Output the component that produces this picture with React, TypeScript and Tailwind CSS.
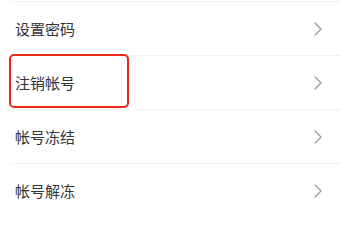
import React from 'react';

const items = ['设置密码', '注销帐号', '帐号冻结', '帐号解冻'];

const Chevron = () => (
    <svg width="8" height="14" viewBox="0 0 8 14" fill="none" className="text-[#9a9a9a]">
        <path d="M1 1l6 6-6 6" stroke="currentColor" strokeWidth="1.3" strokeLinecap="round" strokeLinejoin="round" />
    </svg>
);

export default function App() {
    return (
        <div
            className="w-[340px] h-[217px] overflow-hidden bg-white pt-px"
            style={{ fontFamily: '"Noto Sans CJK SC", "Noto Sans", sans-serif' }}
        >
            {items.map((label, i) => (
                <div key={label} className="relative ml-[12px] h-[54px] border-t border-[#f2f2f2] flex items-center justify-between pl-[3px] pr-[18px]">
                    <span className="text-[15px] leading-none text-[#333333]">{label}</span>
                    <Chevron />
                    {/* highlight box */}
                    {i === 1 && (
                        <div className="absolute left-[-3px] top-[-2px] w-[120px] h-[54px] border-2 border-[#ec2a1c] rounded-[5px]" />
                    )}
                </div>
            ))}
        </div>
    );
}
